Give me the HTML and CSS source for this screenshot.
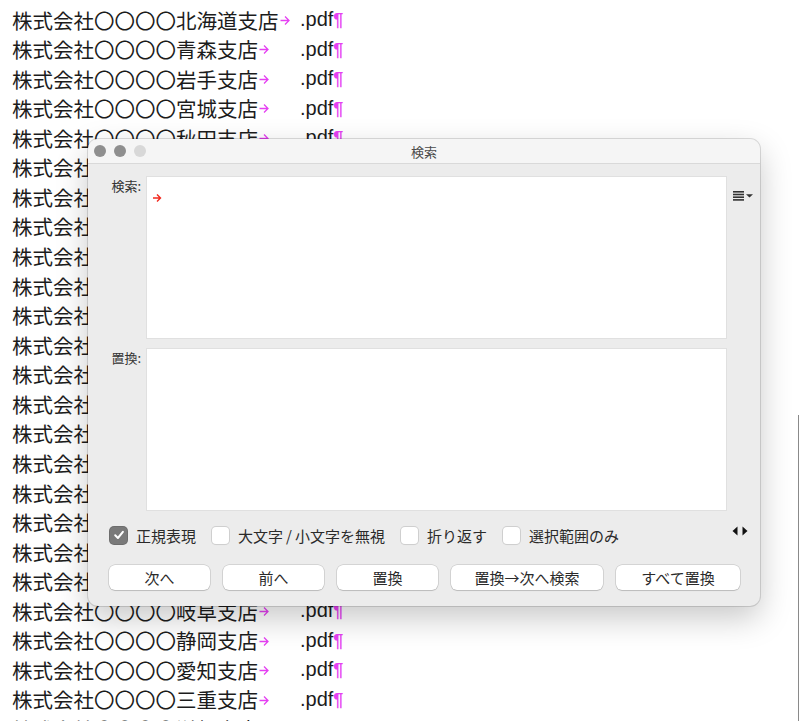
FILE: index.html
```html
<!DOCTYPE html>
<html lang="ja">
<head>
    <meta charset="UTF-8">
    <title>検索</title>
    <link rel="stylesheet" href="styles.css">
</head>
<body>
    <!-- Document text behind the dialog -->
    <div class="doc" id="doc"></div>
    <div class="window-edge"></div>

    <!-- Find / replace panel -->
    <div class="dialog">
        <div class="titlebar">
            <div class="lights">
                <span class="light"></span>
                <span class="light"></span>
                <span class="light off"></span>
            </div>
            <div class="title">検索</div>
        </div>

        <div class="dialog-body">
            <div class="field-row">
                <label class="field-label">検索:</label>
                <div class="field">
                    <svg class="tab-arrow red" width="10" height="10" viewBox="0 0 10 10">
                        <path d="M1 5H8.5M5 1.5L8.5 5L5 8.5" fill="none" stroke="currentColor" stroke-width="1.4"/>
                    </svg>
                </div>
                <div class="side">
                    <svg width="21" height="10" viewBox="0 0 21 10">
                        <rect x="0" y="0" width="11" height="1.6" fill="#333"/>
                        <rect x="0" y="2.7" width="11" height="1.6" fill="#333"/>
                        <rect x="0" y="5.4" width="11" height="1.6" fill="#333"/>
                        <rect x="0" y="8.1" width="11" height="1.6" fill="#333"/>
                        <path d="M13 3.2H20L16.5 6.6Z" fill="#333"/>
                    </svg>
                </div>
            </div>

            <div class="field-row second">
                <label class="field-label">置換:</label>
                <div class="field"></div>
                <div class="side"></div>
            </div>

            <div class="options">
                <label class="opt"><span class="box checked">
                    <svg width="12" height="12" viewBox="0 0 12 12"><path d="M2.2 6.3L4.9 9L9.9 2.8" fill="none" stroke="#fff" stroke-width="2" stroke-linecap="round" stroke-linejoin="round"/></svg>
                </span><span>正規表現</span></label>
                <label class="opt"><span class="box"></span><span>大文字<span class="slash">/</span>小文字を無視</span></label>
                <label class="opt"><span class="box"></span><span>折り返す</span></label>
                <label class="opt"><span class="box"></span><span>選択範囲のみ</span></label>
                <div class="lr">
                    <svg width="16" height="10" viewBox="0 0 16 10">
                        <path d="M5.5 0.5V9.5L0.5 5Z" fill="#111"/>
                        <path d="M10.5 0.5V9.5L15.5 5Z" fill="#111"/>
                    </svg>
                </div>
            </div>

            <div class="buttons">
                <button class="btn w1">次へ</button>
                <button class="btn w1">前へ</button>
                <button class="btn w1">置換</button>
                <button class="btn w2">置換→次へ検索</button>
                <button class="btn w3">すべて置換</button>
            </div>
        </div>
    </div>

    <script>
    // Build the list of branch file names
    const prefs = ['北海道', '青森', '岩手', '宮城', '秋田', '山形', '福島', '茨城', '栃木', '群馬',
        '埼玉', '千葉', '東京', '神奈川', '新潟', '富山', '石川', '福井', '山梨', '長野',
        '岐阜', '静岡', '愛知', '三重', '滋賀'];
    const doc = document.getElementById('doc');
    const arrow = '<svg class="tab-arrow" width="10" height="11" viewBox="0 0 10 11"><path d="M0.5 5.5H9M5 1.5L9 5.5L5 9.5" fill="none" stroke="currentColor" stroke-width="1.3"/></svg>';

    prefs.forEach(p => {
        const row = document.createElement('div');
        row.className = 'line';
        row.innerHTML = `<span class="name">株式会社〇〇〇〇${p}支店${arrow}</span><span class="ext">.pdf<span class="pilcrow">¶</span></span>`;
        doc.appendChild(row);
    });
    </script>
</body>
</html>
```

FILE: styles.css
```css
body {
    margin: 0;
    padding: 0;
    background: #fff;
    font-family: "Noto Sans CJK JP", sans-serif;
    overflow: hidden;
}

.doc {
    padding: 5px 0 0 12px;
    color: #1c1c1c;
    font-size: 20.5px;
}

.line {
    display: grid;
    grid-template-columns: 288px auto;
    height: 29.57px;
    line-height: 29.57px;
    white-space: nowrap;
}

.name {
    display: flex;
    align-items: center;
}

.tab-arrow {
    color: #e540f2;
    margin-left: 1px;
}

.tab-arrow.red {
    color: #f2291e;
    margin: 16px 0 0 5px;
}

.ext {
    font-family: "Liberation Sans", Arial, sans-serif;
    font-size: 20px;
}

.pilcrow {
    color: #e540f2;
    font-weight: bold;
    font-size: 18px;
}

.window-edge {
    position: absolute;
    left: 798px;
    top: 415px;
    bottom: 0;
    width: 1px;
    background: #8a8a8a;
}

/* dialog */

.dialog {
    position: absolute;
    left: 88px;
    top: 139px;
    width: 672px;
    height: 467px;
    background: #ececec;
    border-radius: 10px;
    box-shadow: 0 0 0 1px rgba(0, 0, 0, 0.13), 0 12px 32px rgba(0, 0, 0, 0.22);
    overflow: hidden;
}

.titlebar {
    height: 24px;
    background: #f5f5f5;
    border-bottom: 1px solid #d9d9d9;
    display: flex;
    align-items: center;
    position: relative;
}

.lights {
    display: flex;
    gap: 8px;
    padding-left: 6px;
}

.light {
    width: 12px;
    height: 12px;
    border-radius: 50%;
    background: #8f8f8f;
}

.light.off {
    background: #d8d8d8;
}

.title {
    position: absolute;
    left: 0;
    right: 0;
    text-align: center;
    font-size: 13px;
    color: #4a4a4a;
}

.dialog-body {
    padding-top: 13px;
}

.field-row {
    display: grid;
    grid-template-columns: 59px 579px 34px;
    height: 161px;
}

.field-row.second {
    margin-top: 11px;
}

.field-label {
    text-align: right;
    padding: 1px 6px 0 0;
    font-size: 13px;
    line-height: 16px;
    color: #333;
}

.field {
    background: #fff;
    box-shadow: 0 0 0 1px #e0e0e0;
}

.side {
    padding: 5px 0 0 7px;
}

.options {
    display: flex;
    align-items: center;
    padding-left: 22px;
    margin-top: 16px;
    height: 18px;
    font-size: 15px;
    color: #2a2a2a;
}

.opt {
    display: flex;
    align-items: center;
    gap: 9px;
    margin-right: 16px;
    white-space: nowrap;
}

.slash {
    margin: 0 3px;
}

.box {
    width: 17px;
    height: 17px;
    box-sizing: border-box;
    border-radius: 4px;
    background: #fff;
    box-shadow: 0 0 0 1px #cfcfcf, 0 1px 1px rgba(0, 0, 0, 0.08);
    display: flex;
    align-items: center;
    justify-content: center;
}

.box.checked {
    background: #7a7a7a;
    box-shadow: 0 0 0 1px #6d6d6d;
}

.lr {
    margin-left: auto;
    margin-right: 12px;
    align-self: flex-start;
    margin-top: -7px;
}

.buttons {
    display: flex;
    gap: 13px;
    padding-left: 21px;
    margin-top: 21px;
}

.btn {
    height: 25px;
    background: #fff;
    border: none;
    border-radius: 6px;
    box-shadow: 0 0 0 0.5px rgba(0, 0, 0, 0.2), 0 1px 1px rgba(0, 0, 0, 0.12);
    font-family: "Noto Sans CJK JP", sans-serif;
    font-size: 15px;
    color: #2a2a2a;
    padding: 0;
}

.btn.w1 {
    width: 101px;
}

.btn.w2 {
    width: 152px;
}

.btn.w3 {
    width: 124px;
}
```
